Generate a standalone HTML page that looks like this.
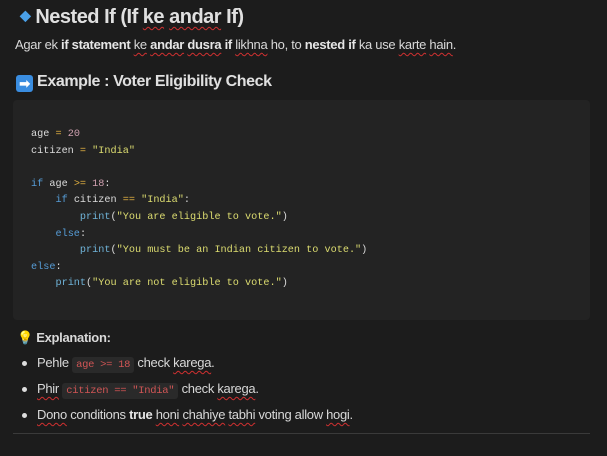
<!DOCTYPE html><html><head><meta charset="utf-8"><style>
body{margin:0;background:#1c1c1c;width:607px;height:456px;overflow:hidden;font-family:"Liberation Sans",sans-serif;color:#d8d8d8;position:relative}
.a{position:absolute;white-space:nowrap}
.sq{text-decoration:underline wavy #d03030;text-decoration-thickness:1px;text-underline-offset:3px}
b{color:#e6e6e6}
pre{position:absolute;left:13px;top:100px;width:577px;height:220px;margin:0;background:#232323;border-radius:4px;font-family:"Liberation Mono",monospace;font-size:10.2px;line-height:16.6px;color:#dcdcdc;padding:27px 0 0 18px;box-sizing:border-box}
.k{color:#569cd6}.n{color:#d0a0b0}.o{color:#e0b040}.s{color:#dcdc70}.f{color:#6fb3d8}
code{font-family:"Liberation Mono",monospace;font-size:10.5px;color:#d05555;background:#2a2a2a;border-radius:3px;padding:2px 4px}
.li{position:absolute;left:22px;font-size:13px;letter-spacing:-0.3px}
.li:before{content:"";position:absolute;left:0;top:6px;width:5px;height:5px;border-radius:50%;background:#ddd}
.li .t{margin-left:15px}
</style></head><body>
<div class="a" style="left:20px;top:6px;font-size:20px;font-weight:bold;color:#e0e0e0;letter-spacing:-0.5px"><span style="color:#4aa0e8;font-size:14px;position:relative;top:-3px">◆</span> Nested If (If <span class="sq">ke</span> <span class="sq">andar</span> If)</div>
<div class="a" style="left:15px;top:37px;font-size:13px;letter-spacing:-0.3px">Agar ek <b>if statement</b> <span class="sq">ke</span> <b class="sq">andar</b> <b class="sq">dusra</b> <b>if</b> <span class="sq">likhna</span> ho, to <b>nested if</b> ka use <span class="sq">karte</span> <span class="sq">hain</span>.</div>
<div class="a" style="left:16px;top:73px;font-size:16px;font-weight:bold;color:#e0e0e0;letter-spacing:-0.4px"><span style="display:inline-block;width:17px;height:17px;background:#3a8de0;border-radius:3px;color:#fff;font-size:13px;text-align:center;line-height:17px;vertical-align:-2px">➡</span> Example : Voter Eligibility Check</div>
<pre>age <span class="o">=</span> <span class="n">20</span>
citizen <span class="o">=</span> <span class="s">"India"</span>

<span class="k">if</span> age <span class="o">&gt;=</span> <span class="n">18</span>:
    <span class="k">if</span> citizen <span class="o">==</span> <span class="s">"India"</span>:
        <span class="f">print</span>(<span class="s">"You are eligible to vote."</span>)
    <span class="k">else</span>:
        <span class="f">print</span>(<span class="s">"You must be an Indian citizen to vote."</span>)
<span class="k">else</span>:
    <span class="f">print</span>(<span class="s">"You are not eligible to vote."</span>)</pre>
<div class="a" style="left:17px;top:330px;font-size:13px;font-weight:bold;letter-spacing:-0.3px"><span style="color:#f0c040">💡</span> Explanation:</div>
<div class="a li" style="top:355px"><span class="t">Pehle <code>age &gt;= 18</code> check <span class="sq">karega</span>.</span></div>
<div class="a li" style="top:381px"><span class="t"><span class="sq">Phir</span> <code>citizen == "India"</code> check <span class="sq">karega</span>.</span></div>
<div class="a li" style="top:407px"><span class="t"><span class="sq">Dono</span> conditions <b>true</b> <span class="sq">honi</span> <span class="sq">chahiye</span> <span class="sq">tabhi</span> voting allow <span class="sq">hogi</span>.</span></div>
<div class="a" style="left:13px;top:433px;width:577px;height:1px;background:#3a3a3a"></div>
</body></html>
